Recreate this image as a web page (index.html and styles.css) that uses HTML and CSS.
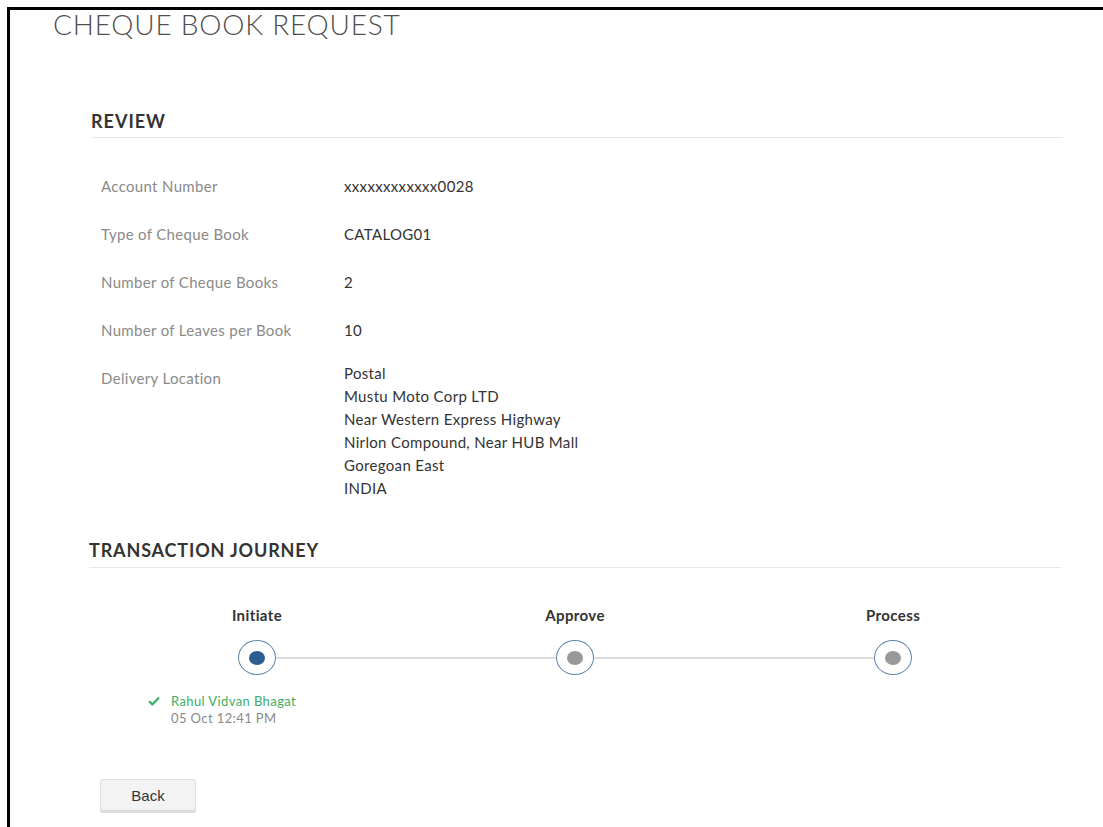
FILE: index.html
```html
<!DOCTYPE html>
<html lang="en">
<head>
<meta charset="utf-8">
<title>Cheque Book Request</title>
<link rel="stylesheet" href="styles.css">
</head>
<body>
<div class="frame">
  <h1 class="page-title">CHEQUE BOOK REQUEST</h1>

  <section class="review">
    <h2 class="section-head">REVIEW</h2>
    <dl class="details">
      <dt>Account Number</dt>
      <dd>xxxxxxxxxxxx0028</dd>
      <dt>Type of Cheque Book</dt>
      <dd>CATALOG01</dd>
      <dt>Number of Cheque Books</dt>
      <dd>2</dd>
      <dt>Number of Leaves per Book</dt>
      <dd>10</dd>
      <dt>Delivery Location</dt>
      <dd class="address">
        <span>Postal</span>
        <span>Mustu Moto Corp LTD</span>
        <span>Near Western Express Highway</span>
        <span>Nirlon Compound, Near HUB Mall</span>
        <span>Goregoan East</span>
        <span>INDIA</span>
      </dd>
    </dl>
  </section>

  <section class="journey">
    <h2 class="section-head">TRANSACTION JOURNEY</h2>
    <ol class="steps">
      <li class="step done">
        <span class="step-name">Initiate</span>
        <span class="node"><span class="dot"></span></span>
        <div class="step-info">
          <svg class="tick" viewBox="0 0 12 10" width="12" height="10" aria-hidden="true">
            <path d="M1 5.2 L4.4 8.4 L11 1.6" fill="none" stroke="#3cae67" stroke-width="2.2" stroke-linejoin="round"/>
          </svg>
          <div>
            <div class="who">Rahul Vidvan Bhagat</div>
            <div class="when">05 Oct 12:41 PM</div>
          </div>
        </div>
      </li>
      <li class="step">
        <span class="step-name">Approve</span>
        <span class="node"><span class="dot"></span></span>
      </li>
      <li class="step">
        <span class="step-name">Process</span>
        <span class="node"><span class="dot"></span></span>
      </li>
    </ol>
  </section>

  <div class="actions">
    <button class="btn" type="button">Back</button>
  </div>
</div>
</body>
</html>
```

FILE: styles.css
```css
html, body {
  margin: 0;
  padding: 0;
  background: #ffffff;
}

body {
  font-family: Lato, "Open Sans", sans-serif;
  color: #333333;
}

.frame {
  margin: 7px 0 0 7px;
  min-height: 820px;
  border-top: 3px solid #000000;
  border-left: 3px solid #000000;
  background: #ffffff;
  box-sizing: border-box;
}

.page-title {
  margin: 0;
  padding-left: 43px;
  font-size: 28px;
  line-height: 28px;
  font-weight: 300;
  color: #4f4f4f;
  letter-spacing: 0.8px;
}

.section-head {
  margin: 0;
  font-size: 18px;
  line-height: 24px;
  font-weight: 700;
  letter-spacing: 1px;
  color: #333333;
  border-bottom: 1px solid #e6e6e6;
}

.review {
  margin: 71px 40px 0 81px;
}

.review .section-head {
  padding: 0 0 4px 0;
}

.details {
  margin: 38px 0 0;
  padding-left: 10px;
  display: grid;
  grid-template-columns: 243px 1fr;
  row-gap: 28px;
  font-size: 15px;
  line-height: 20px;
  letter-spacing: 0.33px;
}

.details dt {
  color: #8a8a8a;
}

.details dd {
  margin: 0;
  color: #333333;
}

.details .address {
  margin-top: -6px;
  display: flex;
  flex-direction: column;
  line-height: 23px;
}

.journey {
  margin: 38px 42px 0 79px;
}

.journey .section-head {
  padding-bottom: 5px;
  letter-spacing: 0.85px;
}

.steps {
  list-style: none;
  margin: 37px 0 0;
  padding: 0 9px;
  display: grid;
  grid-template-columns: repeat(3, 1fr);
}

.step {
  position: relative;
  display: flex;
  flex-direction: column;
  align-items: center;
}

.step-name {
  font-size: 15px;
  line-height: 20px;
  font-weight: 700;
  letter-spacing: 0.4px;
  color: #333333;
}

.node {
  position: relative;
  z-index: 1;
  margin-top: 15px;
  width: 36px;
  height: 33px;
  border: 1px solid #5f86ad;
  border-radius: 50%;
  background: #ffffff;
  display: flex;
  align-items: center;
  justify-content: center;
}

.dot {
  width: 16px;
  height: 14px;
  border-radius: 50%;
  background: #999999;
}

.done .dot {
  background: #2c5f8f;
}

/* connector running to the next step's node */
.step:not(:last-child)::after {
  content: "";
  position: absolute;
  top: 52px;
  left: 50%;
  width: 100%;
  height: 2px;
  background: #dddddd;
}

.step-info {
  align-self: flex-start;
  margin: 17px 0 0 50px;
  display: flex;
  align-items: flex-start;
  gap: 11px;
  font-size: 13px;
  letter-spacing: 0.4px;
}

.tick {
  margin-top: 4px;
}

.who {
  line-height: 18px;
  color: #3cae67;
}

.when {
  line-height: 17px;
  color: #8a8a8a;
}

.actions {
  margin: 52px 0 20px 90px;
}

.btn {
  width: 96px;
  height: 32px;
  padding: 0;
  border: 1px solid #dcdcdc;
  border-radius: 3px;
  background: #f3f3f3;
  box-shadow: 0 2px 0 #dcdcdc;
  font-family: "Liberation Sans", Arial, sans-serif;
  font-size: 15px;
  color: #333333;
  cursor: pointer;
}
```
